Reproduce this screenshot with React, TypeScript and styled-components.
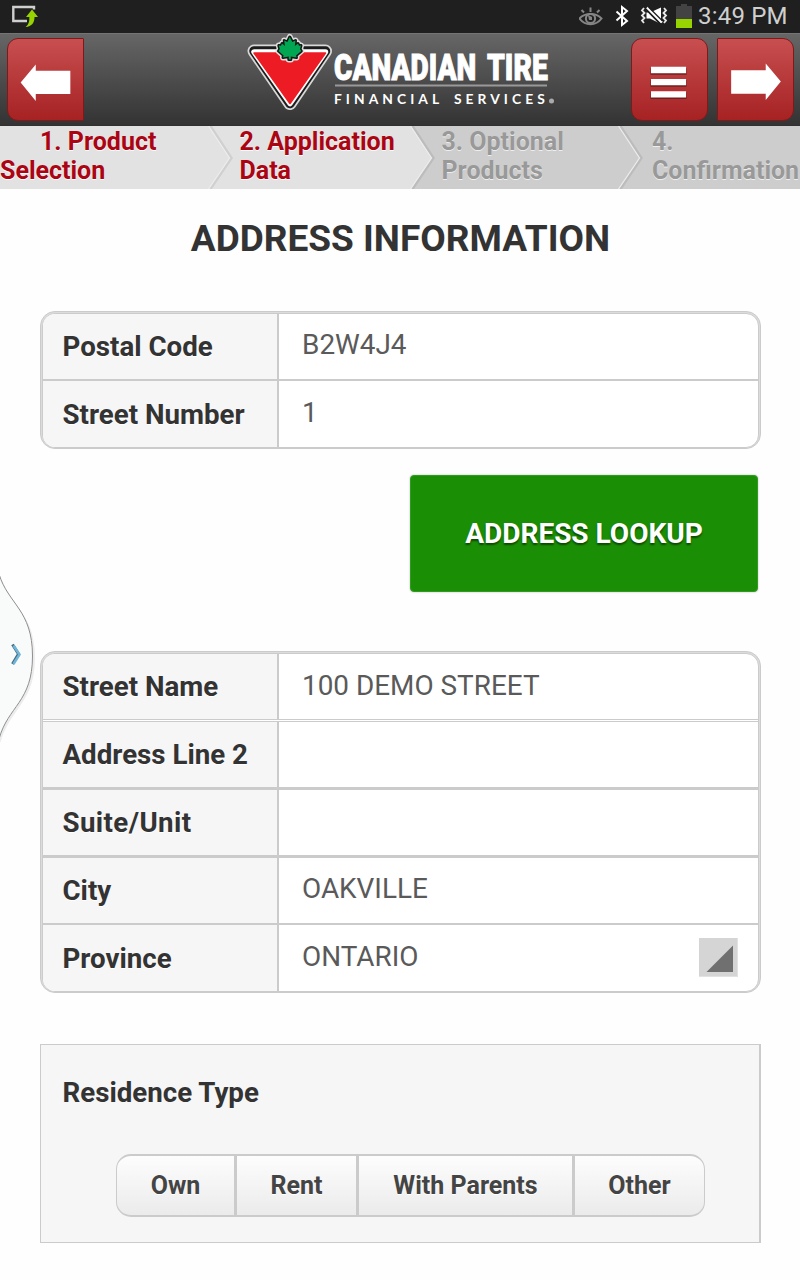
import React from 'react';
import styled, { createGlobalStyle, css } from 'styled-components';

const GlobalStyle = createGlobalStyle`
  * { box-sizing: border-box; }
  body { margin: 0; background: #fff; font-family: Roboto, "Liberation Sans", sans-serif; color: #333; }
  button { font-family: inherit; cursor: pointer; }
`;

const Screen = styled.div`
  position: relative;
  width: 800px;
  height: 1280px;
  overflow: hidden;
  background: #fefefe;
`;

const StatusBar = styled.div`
  display: flex;
  align-items: center;
  justify-content: space-between;
  height: 33px;
  padding: 0 12px;
  background: #1f1f1f;
`;

const StatusIcons = styled.div`
  display: flex;
  align-items: center;
  height: 33px;
`;

const Clock = styled.span`
  width: 90px;
  padding-bottom: 1px;
  font-size: 24px;
  line-height: 31px;
  letter-spacing: 0.2px;
  color: #cfcfcf;
  white-space: nowrap;
`;

const Header = styled.header`
  display: flex;
  align-items: flex-start;
  height: 93px;
  padding: 4px 6px 0 7px;
  border-top: 1px solid #747474;
  border-bottom: 1px solid #303030;
  background: linear-gradient(#666, #333);
`;

const NavButton = styled.button<{ $shape: 'left' | 'both' | 'right' }>`
  display: flex;
  align-items: center;
  justify-content: center;
  width: 77px;
  height: 83px;
  padding: 0;
  border: 1px solid #7f1a1b;
  border-radius: ${({ $shape }) =>
    $shape === 'left' ? '11px 1px 1px 11px' : $shape === 'right' ? '1px 11px 11px 1px' : '11px'};
  background: linear-gradient(#c84f50, #a62223);
`;

const LogoBox = styled.div`
  flex: 1;
  height: 87px;
  margin-top: -5px;
  padding-left: 156px;
`;

const HeaderActions = styled.div`
  display: flex;
  gap: 9px;
`;

const Steps = styled.nav`
  display: grid;
  grid-template-columns: 239.5px 202px 210.5px 148px;
  height: 63px;
`;

const Step = styled.div<{ $active?: boolean; $first?: boolean }>`
  position: relative;
  padding-top: 1px;
  font-size: 25px;
  font-weight: 700;
  line-height: 29px;
  text-indent: ${({ $first }) => ($first ? '40px' : '0')};
  color: ${({ $active }) => ($active ? '#ab0413' : '#999')};
  background: ${({ $active }) => ($active ? '#e2e2e2' : '#cdcdcd')};
  text-shadow: 0 1px 0 ${({ $active }) => ($active ? '#fff' : '#eee')};
`;

const StepChevron = styled.svg`
  position: absolute;
  top: 0;
  right: 0;
`;

const StepText = styled.span`
  position: relative;
  white-space: nowrap;
`;

const Main = styled.main`
  display: flex;
  flex-direction: column;
  padding: 0 39px 0 40px;
`;

const Title = styled.h1`
  margin: 25px 0 48px;
  font-size: 37px;
  font-weight: 700;
  line-height: 49px;
  text-align: center;
  white-space: nowrap;
`;

const FieldGroup = styled.section`
  padding: 1px 1px 0;
  border: 1px solid #cbcbcb;
  border-radius: 15px;
  background: #dcdcdc;
`;

const FieldRows = styled.div`
  overflow: hidden;
  border: 1px solid #cbcbcb;
  border-radius: 13px;
  background: #fff;
`;

const FieldLabel = styled.span<{ $tracking?: number }>`
  height: 100%;
  padding: 0 0 0 19.5px;
  overflow: hidden;
  border-right: 2px solid #cbcbcb;
  background: #f6f6f6;
  font-size: 27.7px;
  font-weight: 700;
  letter-spacing: ${({ $tracking = 0 }) => $tracking}px;
  line-height: 66px;
  text-shadow: 0 1px 0 #fff;
  white-space: nowrap;
`;

const FieldValue = styled.span`
  display: flex;
  justify-content: space-between;
  padding: 0 20px 0 23px;
  font-size: 27.9px;
  line-height: 62px;
  color: #5a5a5a;
  white-space: nowrap;
`;

const FieldRow = styled.label<{ $rule: 'none' | 'thin' | 'thick' | 'double' }>`
  display: grid;
  grid-template-columns: 236px 1fr;
  box-sizing: content-box;
  height: ${({ $rule }) => ($rule === 'none' ? 66 : 65)}px;
  border-bottom: ${({ $rule }) =>
    ({ none: '0', thin: '2px solid #cbcbcb', thick: '3px solid #cbcbcb', double: '3px double #cbcbcb' })[$rule]};
  ${({ $rule }) =>
    $rule === 'none' &&
    css`
      ${FieldLabel} { line-height: 68px; }
    `}
  ${({ $rule }) =>
    ($rule === 'none' || $rule === 'double') &&
    css`
      ${FieldValue} { line-height: 64px; }
    `}
`;

const SelectMark = styled.svg`
  margin-top: 13px;
`;

const LookupButton = styled.button`
  align-self: flex-end;
  width: 348px;
  height: 117px;
  margin: 26px 3px 59px 0;
  padding: 0;
  border: 1px solid #2f9c1e;
  border-radius: 4px;
  background: #1a8f05;
  box-shadow: 0 0 2px rgba(0, 0, 0, 0.3);
  color: #fff;
  font-size: 28px;
  font-weight: 700;
  text-shadow: 0 2px 2px rgba(0, 0, 0, 0.5);
`;

const ChoicePanel = styled.section`
  height: 199px;
  margin-top: 51px;
  padding: 31px 0 0 21.5px;
  border: 1px solid #cbcbcb;
  border-right-width: 2px;
  background: #f6f6f6;
`;

const ChoiceTitle = styled.h2`
  margin: 0;
  font-size: 27.7px;
  font-weight: 700;
  line-height: 33px;
`;

const Segments = styled.div`
  display: flex;
  width: 589px;
  height: 63px;
  margin: 45px 0 0 53.5px;
  border: solid #cbcbcb;
  border-width: 2px 1px;
  border-radius: 15px;
  overflow: hidden;
  background: linear-gradient(#fdfdfd, #ebebeb);
`;

const Segment = styled.button<{ $width: number }>`
  width: ${({ $width }) => $width}px;
  padding: 0;
  border: 0;
  background: none;
  color: #444;
  font-size: 25px;
  font-weight: 700;
  text-shadow: 0 1px 0 #fff;
  white-space: nowrap;

  & + & {
    border-left: 3px solid #cbcbcb;
  }
`;

const DrawerHandle = styled.svg`
  position: absolute;
  left: 0;
  top: 570px;
`;

const steps = [
  { text: ['1. Product', 'Selection'], active: true, fill: '#e2e2e2', width: 32 },
  { text: ['2. Application', 'Data'], active: true, fill: '#cdcdcd', width: 32 },
  { text: ['3. Optional', 'Products'], active: false, fill: '#cdcdcd', width: 34 },
  { text: ['4.', 'Confirmation'], active: false, fill: '', width: 0 },
];

type Rule = 'none' | 'thin' | 'thick' | 'double';
type Field = { label: string; value: string; rule: Rule; select?: boolean; tracking?: number };

const lookupFields: Field[] = [
  { label: 'Postal Code', value: 'B2W4J4', rule: 'thin' },
  { label: 'Street Number', value: '1', rule: 'none' },
];

const addressFields: Field[] = [
  { label: 'Street Name', value: '100 DEMO STREET', rule: 'double' },
  { label: 'Address Line 2', value: '', rule: 'thick' },
  { label: 'Suite/Unit', value: '', rule: 'thick', tracking: 0.4 },
  { label: 'City', value: 'OAKVILLE', rule: 'thin' },
  { label: 'Province', value: 'ONTARIO', rule: 'none', select: true },
];

const choices = [
  { label: 'Own', width: 117 },
  { label: 'Rent', width: 122 },
  { label: 'With Parents', width: 216 },
  { label: 'Other', width: 132 },
];

function Fields({ fields }: { fields: Field[] }) {
  return (
    <FieldGroup>
      <FieldRows>
        {fields.map((f) => (
          <FieldRow key={f.label} $rule={f.rule}>
            <FieldLabel $tracking={f.tracking}>{f.label}</FieldLabel>
            <FieldValue>
              {f.value}
              {f.select && (
                <SelectMark width="39" height="39">
                  <rect width="39" height="39" fill="#e2e2e2" />
                  <rect width="38" height="38" fill="#d5d5d5" />
                  <path d="M7.5 34 L34 7.5 V34 Z" fill="#707070" />
                </SelectMark>
              )}
            </FieldValue>
          </FieldRow>
        ))}
      </FieldRows>
    </FieldGroup>
  );
}

function ShareIcon() {
  return (
    <svg width="28" height="33" viewBox="12 0 28 33">
      <path d="M34 9.500V7H13.300V21H27" fill="none" stroke="#cfcfcf" strokeWidth="2.400" />
      <path d="M32 9.500L38 17H34.500C34.500 22.500 32 26.500 25.500 27C29 24.500 29.500 21 29.300 17H26Z" fill="#97d300" />
    </svg>
  );
}

function SystemIcons() {
  return (
    <svg width="119" height="33" viewBox="579 0 119 33">
      <g fill="none" stroke="#858585" strokeWidth="2">
        <path d="M579.500 18.500C585 12.500 596 12.500 601.500 18.500C596 26 585 26 579.500 18.500Z" />
        <path d="M581.500 10L584 12.500M590.500 7.500V12M599.500 10L597 12.500" />
        <circle cx="590.500" cy="18.500" r="4.600" />
      </g>
      <path d="M588 15L592 17V20H589Z" fill="#858585" />
      <path d="M616.500 11.500L627 21L622 25V7L627 11L616.500 20.500" fill="none" stroke="#fff" strokeWidth="2" />
      <path d="M646.500 12.500H650L661 7.500V24L650 18.500H646.500Z" fill="#fff" />
      <path d="M646.500 9.500L661 24.500" stroke="#1f1f1f" strokeWidth="2" />
      <path d="M647 7.500L662 22.500" stroke="#fff" strokeWidth="2.400" />
      <path d="M648.500 7L662.500 21" stroke="#1f1f1f" strokeWidth="1.200" />
      <path
        d="M644 8L642 10.500L644.500 13L642 15.500L644.500 18L642 20.500L644 23M664 8L666 10.500L663.500 13L666 15.500L663.500 18L666 20.500L664 23"
        fill="none"
        stroke="#e8e8e8"
        strokeWidth="1.800"
      />
      <path d="M681 4H687V6H692V19H676V6H681Z" fill="#434343" />
      <rect x="676" y="19" width="16" height="9" fill="#97d300" />
    </svg>
  );
}

function Logo() {
  return (
    <svg width="330" height="87" viewBox="240 33.5 330 87">
      <path d="M254 51.500H325.500L290 104Z" fill="none" stroke="#d8d8d8" strokeWidth="13" strokeLinejoin="round" />
      <path d="M254 51.500H325.500L290 104Z" fill="none" stroke="#1c1c1c" strokeWidth="9.500" strokeLinejoin="round" />
      <path d="M254 52.500H325.500L290 104Z" fill="#fff" stroke="#fff" strokeWidth="5.500" strokeLinejoin="round" />
      <path d="M254 53.500H325.500L290 104Z" fill="#ed1c24" stroke="#ed1c24" strokeWidth="1.500" strokeLinejoin="round" />
      <g strokeLinejoin="round">
        {[
          { fill: '#ddd', stroke: '#ddd', width: 6 },
          { fill: '#00a651', stroke: '#161616', width: 3 },
        ].map((leaf) => (
          <path
            key={leaf.fill}
            d="M289.800 37.500L292.300 42.500L295.500 41L294.800 46.500L298 44L299 46.300L301 46L300 49.500L301.300 51.500L296 56L296.500 58L290.800 57V60H288.800V57L283 58L283.600 56L278.500 51.500L279.800 49.500L278.800 46L281 46.300L282 44L285 46.500L284.200 41L287.400 42.500Z"
            fill={leaf.fill}
            stroke={leaf.stroke}
            strokeWidth={leaf.width}
            paintOrder="stroke"
          />
        ))}
      </g>
      <g fill="#fff" stroke="#fff" strokeWidth="1" fontFamily="Roboto, sans-serif" fontSize="37.500" fontWeight="900">
        <text transform="translate(334 80) scale(0.748 1)">CANADIAN</text>
        <text transform="translate(487 80) scale(0.755 1)">TIRE</text>
      </g>
      <rect x="335" y="85" width="212" height="2" fill="#999" />
      <g fill="#fff" fontFamily="Lato, sans-serif" fontSize="13.800" fontWeight="700">
        <text x="334" y="104" letterSpacing="4.050">FINANCIAL</text>
        <text x="454" y="104" letterSpacing="4.050">SERVICES</text>
      </g>
      <circle cx="551.500" cy="101.500" r="2.500" fill="#aaa" />
    </svg>
  );
}

export default function App() {
  return (
    <Screen>
      <GlobalStyle />
      <StatusBar>
        <ShareIcon />
        <StatusIcons>
          <SystemIcons />
          <Clock>3:49 PM</Clock>
        </StatusIcons>
      </StatusBar>
      <Header>
        <NavButton $shape="left" aria-label="Back">
          <svg width="77" height="80" viewBox="7 39 77 80">
            <path d="M20 81.500L35.500 63V69.500H71V93.500H35.500V100.500Z" fill="#fff" />
          </svg>
        </NavButton>
        <LogoBox>
          <Logo />
        </LogoBox>
        <HeaderActions>
          <NavButton $shape="both" aria-label="Menu">
            <svg width="77" height="80" viewBox="631 39 77 80">
              <path d="M650 67H687V73.500H650ZM650 79H687V86H650ZM650 91.500H687V98.500H650Z" fill="#6e2020" />
              <path d="M650.500 65.500H686.500V72H650.500ZM650.500 78H686.500V84.500H650.500ZM650.500 90.500H686.500V97H650.500Z" fill="#fff" />
            </svg>
          </NavButton>
          <NavButton $shape="right" aria-label="Next">
            <svg width="77" height="80" viewBox="717 39 77 80">
              <path d="M781.500 80.500L766 62V69H730.500V93H766V99.500Z" fill="#fff" />
            </svg>
          </NavButton>
        </HeaderActions>
      </Header>
      <Steps>
        {steps.map((s, i) => (
          <Step key={s.text[0]} $active={s.active} $first={i === 0}>
            {s.width > 0 && (
              <StepChevron width={s.width} height="63" viewBox={`0 0 ${s.width} 63`}>
                <path d={`M1 0L22 32L1 63H${s.width}V0Z`} fill={s.fill} />
                <path d="M2.500 0L23.500 32L2.500 63" fill="none" stroke="#000" strokeOpacity="0.080" strokeWidth="2.500" />
                <path d="M0.500 0L21.500 32L0.500 63" fill="none" stroke="#ececec" strokeWidth="1.200" />
              </StepChevron>
            )}
            <StepText>
              {s.text[0]}
              <br />
              {s.text[1]}
            </StepText>
          </Step>
        ))}
      </Steps>
      <Main>
        <Title>ADDRESS INFORMATION</Title>
        <Fields fields={lookupFields} />
        <LookupButton>ADDRESS LOOKUP</LookupButton>
        <Fields fields={addressFields} />
        <ChoicePanel>
          <ChoiceTitle>Residence Type</ChoiceTitle>
          <Segments>
            {choices.map((c) => (
              <Segment key={c.label} $width={c.width}>
                {c.label}
              </Segment>
            ))}
          </Segments>
        </ChoicePanel>
      </Main>
      <DrawerHandle width="40" height="176" viewBox="0 570 40 176">
        <path d="M-1 577C8 607 33.500 612 33.500 658C33.500 703 8 708 -1 742" fill="none" stroke="#000" strokeOpacity="0.070" strokeWidth="3" />
        <path d="M-1 574C8 604 32.500 610 32.500 656C32.500 702 8 706 -1 739Z" fill="#f9fbfa" stroke="#8f8f8f" />
        <path d="M12.500 644.500L18.500 654L12.500 664" fill="none" stroke="#456a80" strokeWidth="3" />
        <path d="M13.500 645.500L19.500 654.500L13.500 664" fill="none" stroke="#70b5d8" strokeWidth="2.500" />
      </DrawerHandle>
    </Screen>
  );
}
